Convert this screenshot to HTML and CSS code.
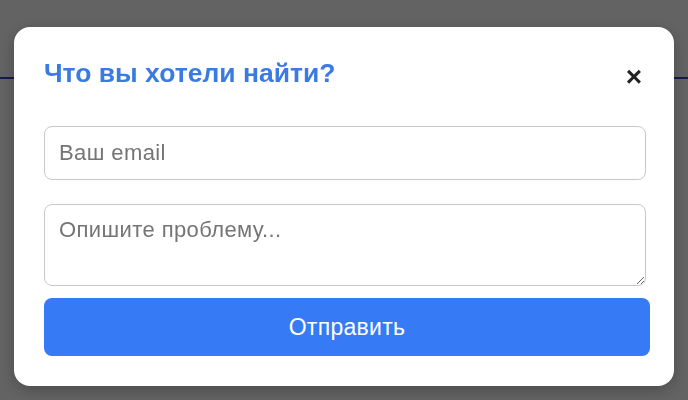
FILE: index.html
```html
<!DOCTYPE html>
<html lang="ru">
<head>
<meta charset="utf-8">
<link rel="stylesheet" href="styles.css">
</head>
<body>
<div class="page">
  <div class="page-header"></div>
</div>
<div class="overlay">
  <div class="modal">
    <div class="modal-head">
      <h2 class="modal-title">Что вы хотели найти?</h2>
      <button class="close" type="button" aria-label="Закрыть">&times;</button>
    </div>
    <form class="form">
      <input class="field email" type="email" placeholder="Ваш email">
      <textarea class="field message" placeholder="Опишите проблему..."></textarea>
      <button class="submit" type="button">Отправить</button>
    </form>
  </div>
</div>
</body>
</html>
```
FILE: styles.css
```css
html, body {
  margin: 0;
  padding: 0;
  height: 100%;
}
body {
  background: #fff;
  font-family: "Liberation Sans", Arial, sans-serif;
  overflow: hidden;
}
.page-header {
  height: 77px;
  border-bottom: 2px solid #2c4db8;
}
.overlay {
  position: fixed;
  inset: 0;
  background: rgba(0, 0, 0, 0.61);
  display: flex;
  justify-content: center;
  align-items: flex-start;
  padding-top: 27px;
}
.modal {
  width: 660px;
  box-sizing: border-box;
  background: #fff;
  border-radius: 16px;
  padding: 30px 24px 30px 30px;
  box-shadow: 0 4px 16px rgba(0, 0, 0, 0.25);
}
.modal-head {
  display: flex;
  align-items: flex-start;
  justify-content: space-between;
  height: 69px;
}
.modal-title {
  margin: 0;
  font-size: 26.5px;
  font-weight: bold;
  color: #3a7be2;
  line-height: 30px;
  padding-top: 1px;
}
.close {
  border: 0;
  background: none;
  padding: 0;
  margin: 5px 8px 0 0;
  font-family: "Liberation Sans", Arial, sans-serif;
  font-size: 28px;
  font-weight: bold;
  line-height: 30px;
  color: #222;
  cursor: pointer;
}
.form {
  display: flex;
  flex-direction: column;
  align-items: flex-start;
}
.field {
  width: 602px;
  box-sizing: border-box;
  border: 1px solid #c8c8c8;
  border-radius: 8px;
  padding: 0 14px;
  font-family: "Liberation Sans", Arial, sans-serif;
  font-size: 22px;
  letter-spacing: 0.4px;
  color: #333;
  background: #fff;
}
.field::placeholder {
  color: #757575;
}
.email {
  height: 54px;
  margin-bottom: 24px;
}
.message {
  height: 82px;
  padding-top: 12px;
  margin-bottom: 12px;
  resize: vertical;
}
.submit {
  width: 606px;
  height: 58px;
  border: 0;
  border-radius: 8px;
  background: #367af6;
  color: #fff;
  font-family: "Liberation Sans", Arial, sans-serif;
  font-size: 23px;
  letter-spacing: 0.3px;
  cursor: pointer;
}
```
